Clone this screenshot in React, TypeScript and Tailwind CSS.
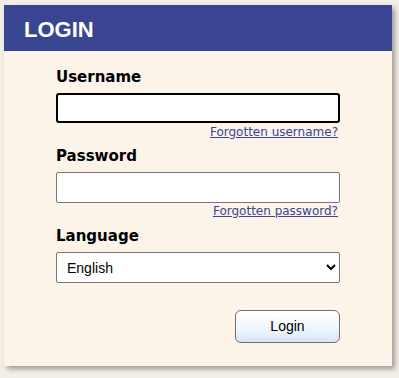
import React from "react";

export default function App() {
  return (
    <div className="w-[399px] h-[378px] bg-[#f3efe7] pt-[5px] pl-[4px]">
      <div className="w-[388px] h-[361px] bg-[#fcf4e9] shadow-[3px_3px_5px_rgba(0,0,0,0.35)] flex flex-col">
        <div className="h-[46px] bg-[#3a4592] pt-[14px] pl-[20px]">
          <div className="text-[22px] leading-[22px] font-bold text-white font-['Liberation_Sans',Arial,sans-serif]">
            LOGIN
          </div>
        </div>
        <div className="pl-[52px] pt-[17px] w-[336px] flex flex-col font-['DejaVu_Sans',Verdana,sans-serif]">
          <label className="text-[15px] leading-[18px] font-bold text-black">Username</label>
          <input
            type="text"
            className="mt-[7px] h-[30px] w-[284px] bg-white border-2 border-black rounded-[3px] outline-none"
          />
          <div className="mt-[2px] pr-[2px] flex justify-end">
            <a href="#" className="text-[12px] leading-[14px] text-[#3a4592] underline">
              Forgotten username?
            </a>
          </div>
          <label className="mt-[8px] text-[15px] leading-[18px] font-bold text-black">Password</label>
          <input
            type="password"
            className="mt-[7px] h-[31px] w-[284px] bg-white border border-[#767676] rounded-[2px] outline-none"
          />
          <div className="mt-[1px] pr-[2px] flex justify-end">
            <a href="#" className="text-[12px] leading-[14px] text-[#3a4592] underline">
              Forgotten password?
            </a>
          </div>
          <label className="mt-[9px] text-[15px] leading-[18px] font-bold text-black">Language</label>
          <select
            defaultValue="English"
            className="mt-[7px] h-[31px] w-[284px] bg-white border border-[#767676] rounded-[2px] pl-[6px] text-[14px] text-black font-['Liberation_Sans',Arial,sans-serif] outline-none"
          >
            <option>English</option>
          </select>
          <div className="mt-[27px] flex justify-end">
            <button className="w-[105px] h-[33px] rounded-[6px] border border-[#707070] bg-gradient-to-b from-white via-[#f3f7fb] to-[#d8e7f5] text-[14px] text-black font-['Liberation_Sans',Arial,sans-serif]">
              Login
            </button>
          </div>
        </div>
      </div>
    </div>
  );
}
